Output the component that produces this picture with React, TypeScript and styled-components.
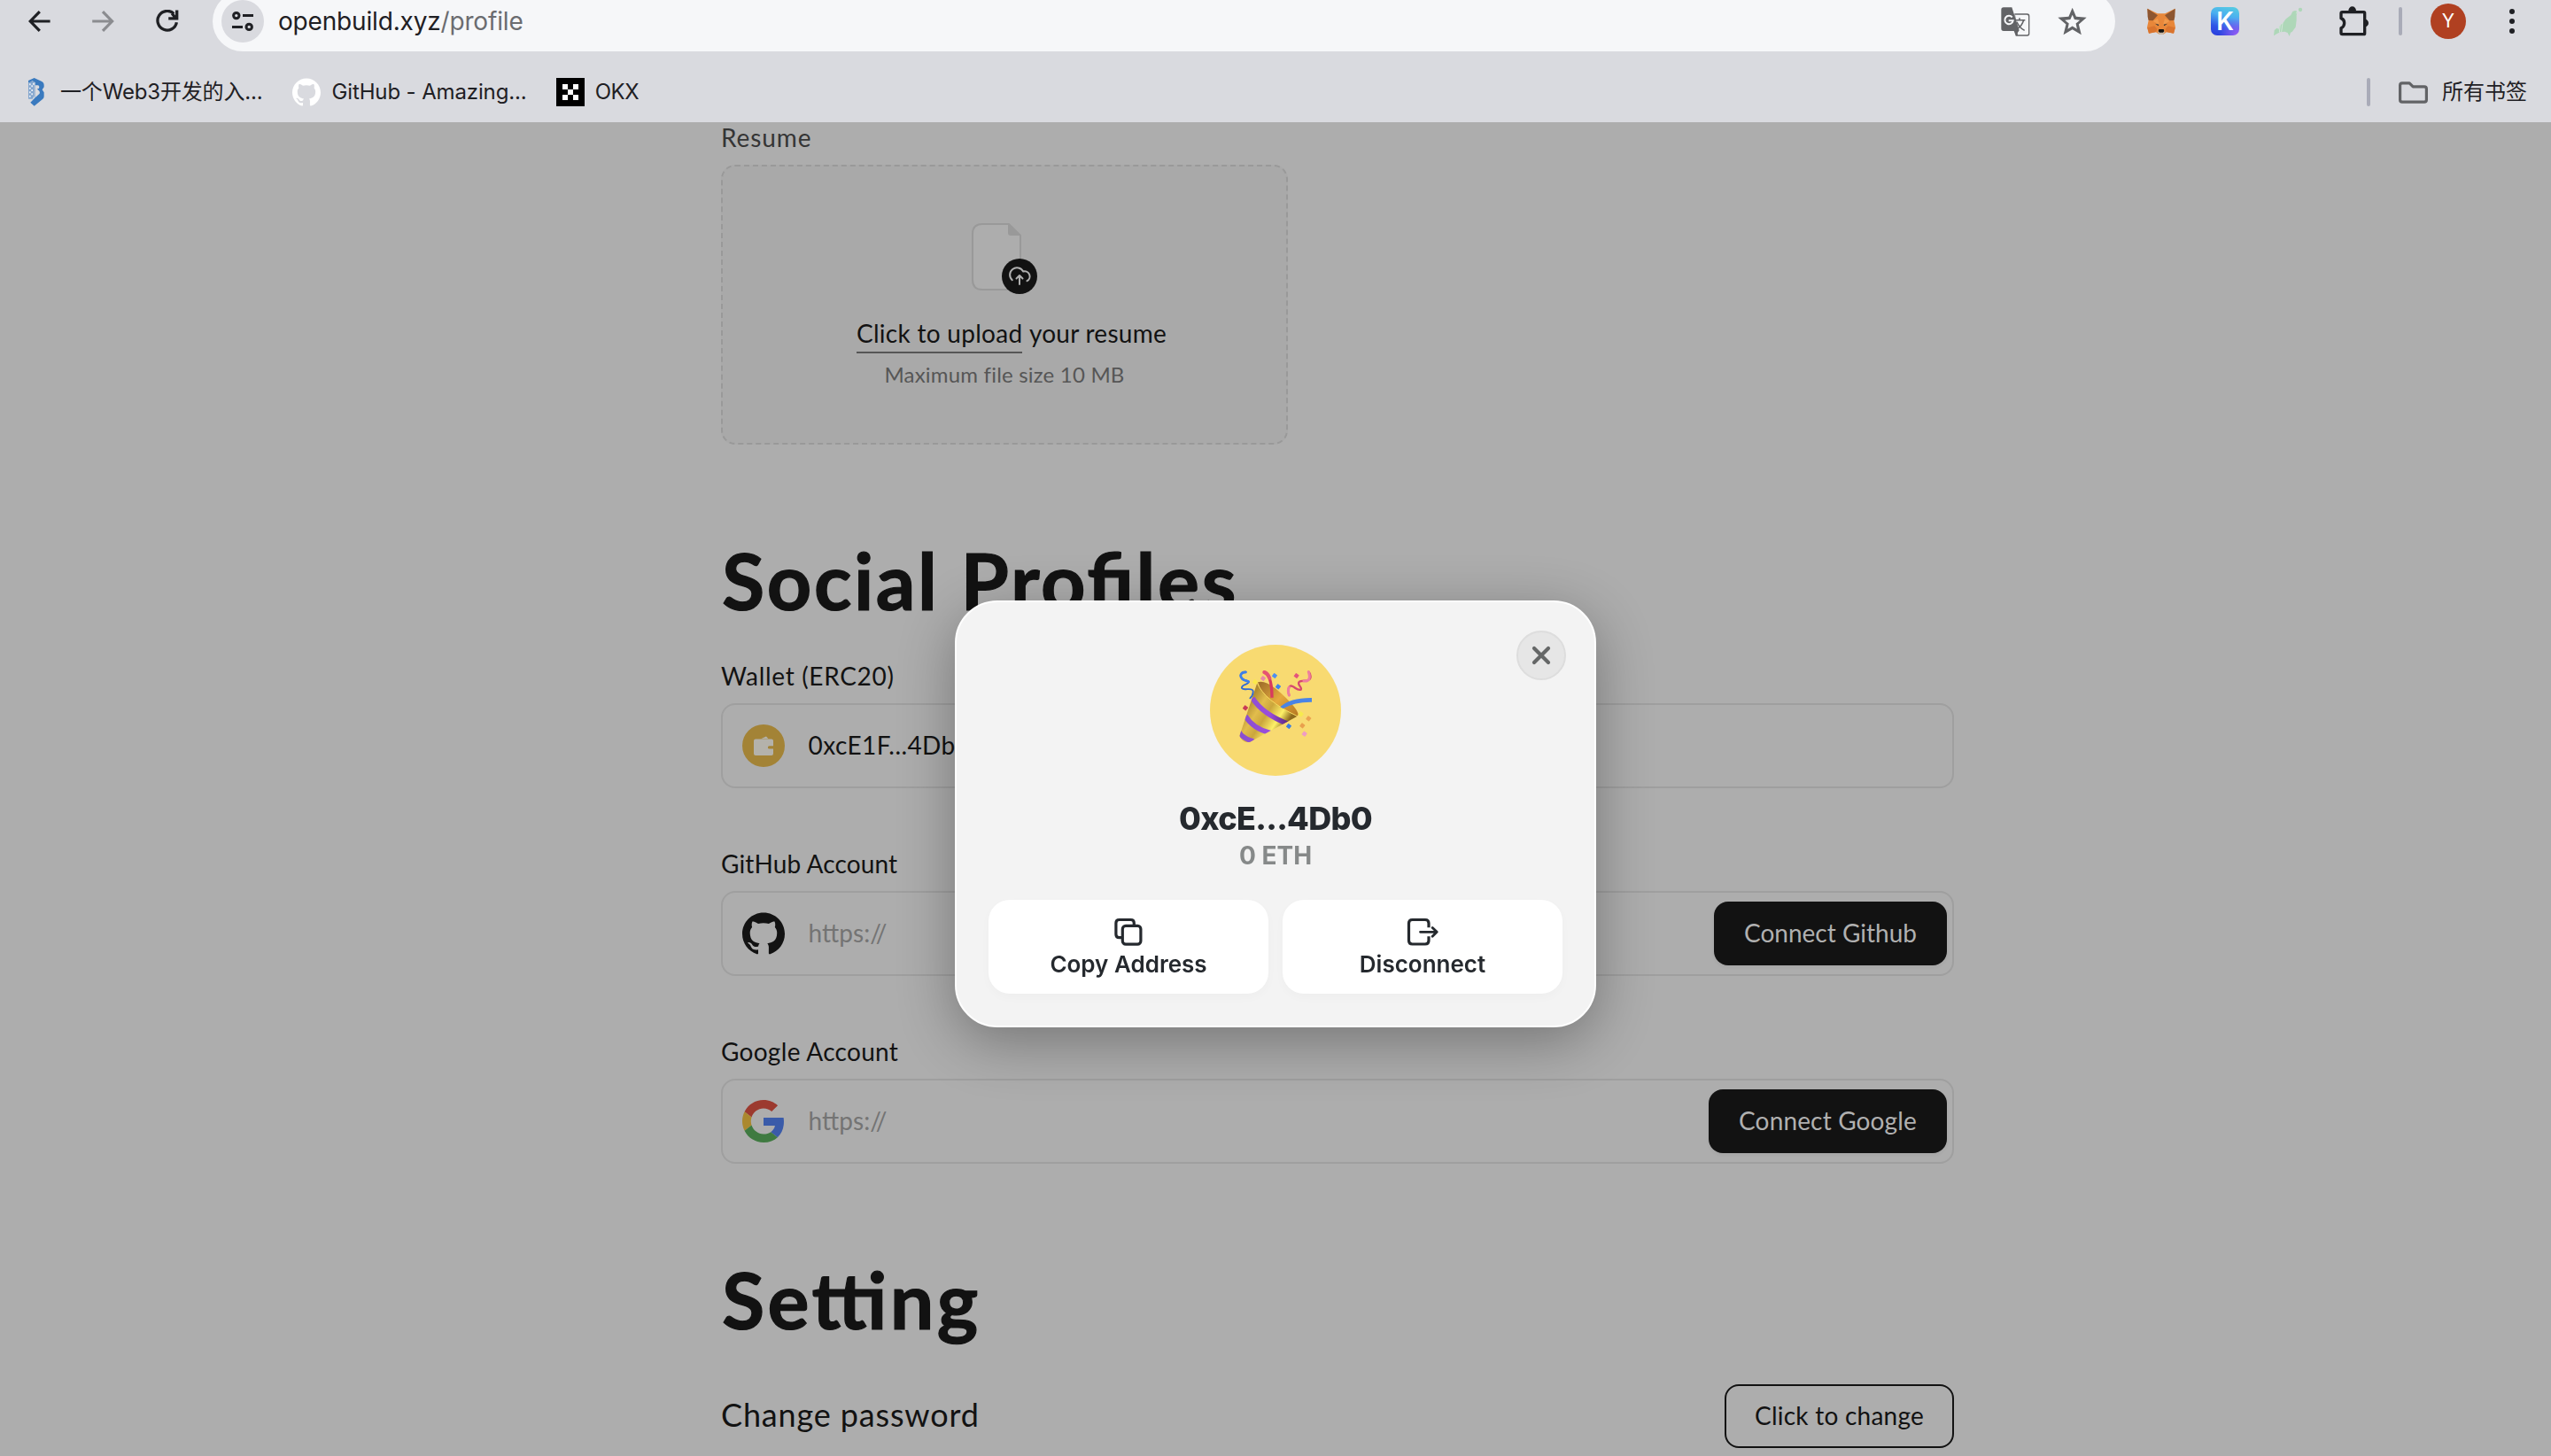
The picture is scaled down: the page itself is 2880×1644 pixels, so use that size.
import React from "react";
import styled, { createGlobalStyle } from "styled-components";
import { SiGithub } from "react-icons/si";

const GlobalStyle = createGlobalStyle`
  *, *::before, *::after { box-sizing: border-box; }
  body { margin: 0; background: #adadad; overflow: hidden; }
  button { font: inherit; color: inherit; border: 0; margin: 0; padding: 0; background: none; }
  svg { display: block; flex: none; }
`;

const uiFont = `Inter, "Noto Sans CJK SC", sans-serif`;
const pageFont = `Lato, "Noto Sans", sans-serif`;

const Window = styled.div`
  width: 2880px;
  height: 1644px;
  overflow: hidden;
  display: flex;
  flex-direction: column;
  background: #adadad;
`;

/* ---------- browser chrome ---------- */

const Chrome = styled.header`
  flex: none;
  height: 138px;
  background: #d9dadf;
  font-family: ${uiFont};
  color: #1f2024;
  display: flex;
  flex-direction: column;
  justify-content: flex-end;
`;

const Toolbar = styled.div`
  flex: none;
  height: 68px;
  display: flex;
  align-items: center;
`;

const NavButtons = styled.div`
  width: 240px;
  padding-left: 32px;
  display: flex;
  align-items: center;
  gap: 47px;
`;

const Omnibox = styled.div`
  width: 2148px;
  height: 68px;
  border-radius: 34px;
  background: #f6f7f9;
  padding: 0 32px 0 10px;
  display: flex;
  align-items: center;
`;

const SiteInfo = styled.div`
  width: 48px;
  height: 48px;
  border-radius: 50%;
  background: #d9dadf;
  display: grid;
  place-items: center;
`;

const Url = styled.div`
  flex: 1;
  margin-left: 16px;
  font-size: 28px;
  line-height: 40px;
  letter-spacing: -0.17px;
`;

const UrlPath = styled.span`
  color: #6b6c70;
`;

const OmniboxActions = styled.div`
  display: flex;
  align-items: center;
  gap: 31px;
`;

const Extensions = styled.div`
  display: flex;
  align-items: center;
  margin-left: 36px;
`;

const Slot = styled.div<{ $w: number }>`
  width: ${(p) => p.$w}px;
  display: flex;
  align-items: center;
`;

const KBadge = styled.div`
  width: 32px;
  height: 32px;
  border-radius: 7px;
  background: radial-gradient(circle at 95% 100%, #9a5cf5 0%, rgba(154, 92, 245, 0) 48%),
    linear-gradient(195deg, #58cfe0 0%, #49aef0 35%, #2f55e6 70%, #2b3bdc 100%);
  color: #fff;
  font: 600 28px/32px Inter, sans-serif;
  text-align: center;
`;

const Divider = styled.i`
  display: block;
  width: 4px;
  height: 32px;
  border-radius: 2px;
  background: #a9abb8;
`;

const Avatar = styled.div`
  width: 40px;
  height: 40px;
  border-radius: 50%;
  background: #b04021;
  color: #fff;
  font-size: 21px;
  line-height: 40px;
  text-align: center;
`;

const Bookmarks = styled.nav`
  flex: none;
  height: 80px;
  padding: 12px 27px 0 32px;
  display: flex;
  align-items: center;
  font-size: 24px;
  line-height: 32px;
`;

const Bookmark = styled.div<{ $gap: number; $after?: number }>`
  display: flex;
  align-items: center;
  gap: ${(p) => p.$gap}px;
  margin-right: ${(p) => p.$after ?? 0}px;
  white-space: nowrap;
`;

const Label = styled.span<{ $ls: number }>`
  letter-spacing: ${(p) => p.$ls}px;
`;

const OkxMark = styled.div`
  width: 32px;
  height: 32px;
  background: #000;
  display: grid;
  place-items: center;
`;

const AllBookmarks = styled.div`
  margin-left: auto;
  display: flex;
  align-items: center;
`;

const FolderWrap = styled.span`
  margin: 0 16px 0 32px;
`;

/* ---------- page ---------- */

const Page = styled.main`
  flex: 1;
  min-height: 0;
  overflow: hidden;
  display: flex;
  justify-content: center;
  padding-left: 140px;
  font-family: ${pageFont};
  font-size: 28px;
  line-height: 40px;
  color: #121212;
`;

const Column = styled.div`
  width: 1392px;
  margin-top: -3px;
`;

const Field = styled.section<{ $after?: number }>`
  display: flex;
  flex-direction: column;
  gap: 11px;
  margin-bottom: ${(p) => p.$after ?? 65}px;
`;

const FieldLabel = styled.label<{ $ls: number; $muted?: boolean }>`
  letter-spacing: ${(p) => p.$ls}px;
  color: ${(p) => (p.$muted ? "#353535" : "#121212")};
`;

const DropZone = styled.div`
  width: 640px;
  height: 316px;
  border-radius: 16px;
  background: #a9a9a9;
  display: flex;
  flex-direction: column;
  align-items: center;
  padding-top: 64px;
  border: 2px dashed #999;
`;

const DropTitle = styled.div`
  margin-top: 24px;
  padding-left: 16px;
  display: flex;
  gap: 7.5px;
  line-height: 41px;
  white-space: nowrap;
`;

const DropLink = styled.span`
  letter-spacing: 0.28px;
  border-bottom: 2px solid #565656;
`;

const DropRest = styled.span`
  letter-spacing: 0.26px;
`;

const DropHint = styled.div`
  margin-top: 8px;
  font-size: 24px;
  line-height: 32px;
  letter-spacing: 0.2px;
  color: #565656;
`;

const Heading = styled.h2<{ $ls: number }>`
  margin: 0 0 40px 1px;
  font-size: 88px;
  font-weight: 700;
  line-height: 96px;
  letter-spacing: ${(p) => p.$ls}px;
  font-feature-settings: "liga" 1;
  -webkit-text-stroke: 1.2px #121212;
`;

const InputBox = styled.div`
  height: 96px;
  border: 2px solid #9f9f9f;
  border-radius: 16px;
  padding: 0 6px 0 22px;
  display: flex;
  align-items: center;
`;

const InputText = styled.span<{ $ls: number; $placeholder?: boolean }>`
  flex: 1;
  padding: 0 0 3px 26.5px;
  letter-spacing: ${(p) => p.$ls}px;
  color: ${(p) => (p.$placeholder ? "#747474" : "#121212")};
  font-feature-settings: "liga" 1;
`;

const WalletBadge = styled.div`
  width: 48px;
  height: 48px;
  border-radius: 50%;
  background: #a38336;
  display: grid;
  place-items: center;
`;

const SolidButton = styled.button<{ $w: number; $ls: number }>`
  width: ${(p) => p.$w}px;
  height: 72px;
  padding-bottom: 2px;
  border-radius: 16px;
  background: #121212;
  color: #b0b0b0;
  letter-spacing: ${(p) => p.$ls}px;
  box-shadow: 0 2px 4px rgba(0, 0, 0, 0.05);
`;

const SettingRow = styled.div`
  display: flex;
  justify-content: space-between;
  align-items: center;
  height: 72px;
  margin-top: 48px;
`;

const SettingName = styled.span`
  padding: 0 0 4px 0;
  font-size: 36px;
  line-height: 48px;
  letter-spacing: 0.85px;
`;

const OutlineButton = styled.button`
  width: 259px;
  height: 72px;
  padding-bottom: 2px;
  border: 2px solid #121212;
  border-radius: 16px;
  letter-spacing: 0.24px;
`;

/* ---------- wallet dialog ---------- */

const Overlay = styled.div`
  position: fixed;
  inset: 138px 0 0 0;
  display: flex;
  justify-content: center;
  align-items: flex-start;
  padding-top: 540px;
  overflow: hidden;
  font-family: ${uiFont};
  color: #25292e;
`;

const Dialog = styled.div`
  position: relative;
  width: 724px;
  height: 482px;
  border: 2px solid #fff;
  border-radius: 48px;
  background: #f3f3f3;
  box-shadow: 0 16px 64px rgba(0, 0, 0, 0.32);
  padding: 48px 36px 36px;
  display: flex;
  flex-direction: column;
  align-items: center;
`;

const CloseButton = styled.button`
  position: absolute;
  top: 32px;
  right: 32px;
  width: 56px;
  height: 56px;
  border-radius: 50%;
  border: 2px solid #dddddd;
  background: #e6e6e6;
  display: grid;
  place-items: center;
`;

const Emblem = styled.div`
  width: 148px;
  height: 148px;
  border-radius: 50%;
  background: #f8da71;
  display: flex;
  justify-content: center;
  padding-top: 29px;
`;

const Address = styled.div`
  margin-top: 26px;
  font-size: 36px;
  font-weight: 800;
  line-height: 44px;
  letter-spacing: -0.72px;
`;

const Balance = styled.div`
  margin-top: 2px;
  font-size: 28px;
  font-weight: 700;
  line-height: 36px;
  color: #868989;
`;

const Actions = styled.div`
  width: 100%;
  margin-top: 32px;
  display: grid;
  grid-template-columns: 1fr 1fr;
  gap: 16px;
`;

const ActionButton = styled.button`
  height: 106px;
  border-radius: 24px;
  background: #fff;
  box-shadow: 0 4px 12px rgba(0, 0, 0, 0.025);
  display: flex;
  flex-direction: column;
  align-items: center;
  padding-top: 20px;
  gap: 5px;
  font-size: 26px;
  font-weight: 600;
  line-height: 32px;
`;

/* ---------- icons ---------- */

const BackIcon = () => (
  <svg width="25" height="24" viewBox="0 0 25 24" fill="none" stroke="#1f2024" strokeWidth="3.2">
    <path d="M12.8 1.2 2.2 12l10.6 10.8M2.4 12H24.6" />
  </svg>
);

const ForwardIcon = () => (
  <svg width="25" height="24" viewBox="0 0 25 24" fill="none" stroke="#8b8c90" strokeWidth="3.2">
    <path d="M12 1.2 22.6 12 12 22.8M22.4 12H.2" />
  </svg>
);

const ReloadIcon = () => (
  <svg width="26" height="26" viewBox="0 0 26 26" fill="none" stroke="#1f2024" strokeWidth="3.3">
    <path d="M20.2 4.4A10.8 10.8 0 1 0 23.4 14.2" />
    <path d="M23.7.6v9.3H14.2M21.8 8.8l-3.6-4.6" />
  </svg>
);

const TuneIcon = () => (
  <svg width="24" height="24" viewBox="0 0 24 24" fill="none" stroke="#1f2024" strokeWidth="3">
    <circle cx="4.8" cy="5.6" r="3.2" />
    <path d="M12 5.6h12M0 18.4h12" />
    <circle cx="19.2" cy="18.4" r="3.2" />
  </svg>
);

const TranslateIcon = () => (
  <svg width="33" height="33" viewBox="58 22 99 99">
    <path d="M104 44h43q8 0 8 8v60q0 8-8 8h-39z" fill="#626366" />
    <path d="M106 48h40q5 0 5 5v58q0 5-5 5h-31z" fill="#f6f7f9" />
    <path d="M104 66h36M121 59v7M135 66q-6 20-22 30M112 72q8 20 26 29" fill="none" stroke="#626366" strokeWidth="4.600" />
    <path d="M67 23h28l25 78-12 17-6-15H67q-8 0-8-8V31q0-8 8-8z" fill="#626366" />
    <path d="M96 56.500a14 14 0 1 0 3 11.500H84" fill="none" stroke="#f6f7f9" strokeWidth="6" />
  </svg>
);

const StarIcon = () => (
  <svg width="33" height="32" viewBox="249 21 101 96">
    <path
      fillRule="evenodd"
      fill="#626366"
      d="M300 22l13 31 36 3-27 24 9 36-31-19-31 19 9-36-28-24 37-3zM300 47l-7 16-19 2 14 12-4 19 16-10 16 10-4-19 14-12-19-2z"
    />
  </svg>
);

const FoxIcon = () => (
  <svg width="32" height="30" viewBox="552 26 96 90">
    <path d="M553 28l34 17h26l34-17-4 40 5 24-6 20-24-4-12 8h-12l-12-8-24 4-6-20 5-24z" fill="#e8873a" />
    <path d="M553 28l35 23-16 18-15-1-3-12zM647 28l-35 23 16 18 15-1 3-12z" fill="#8e5630" />
    <path d="M553 93l24-6 9 10-4 10-24 5zM647 93l-24-6-9 10 4 10 24 5z" fill="#d9742f" />
    <path d="M572 70l16-8 6 22zM628 70l-16-8-6 22z" fill="#f09a4c" />
    <path d="M579 79l13 3-2 5zM621 79l-13 3 2 5z" fill="#2f3437" />
    <path d="M588 107l5-5h14l5 5-5 9h-14z" fill="#c9b8a6" />
    <path d="M592 98h16l2 7-4 4h-12l-4-4z" fill="#15130f" />
  </svg>
);

const LeafIcon = () => (
  <svg width="33" height="33" viewBox="984 22 99 99" fill="#aed7b8">
    <circle cx="1074" cy="31" r="6.5" />
    <path d="M1056 34l8 2-3 14v16l-3 24-12 16-5 2-4 13-6-12-10-4-14 2-7-4 4-18 12-10 8-12 18-14 6-12z" />
    <path d="M984 119l2-18 8-8 7 3 2 12-8 4z" />
    <path d="M1006 82l-3 24M1014 76l-4 30M1066 32l-6 12" stroke="#d9eadf" strokeWidth="2.4" fill="none" />
  </svg>
);

const PuzzleIcon = () => (
  <svg width="34" height="34" viewBox="1204 15 102 102">
    <path
      d="M1214 35H1287Q1290 35 1290 38V107Q1290 110 1287 110H1214Q1210 110 1210 106V89Q1221 84 1221 72T1210 56V39Q1210 35 1214 35Z"
      fill="none"
      stroke="#1f2024"
      strokeWidth="10"
      strokeLinejoin="round"
    />
    <path d="M1235 31a13 15 0 0 1 26 0zM1291 59a12 13 0 0 1 0 26z" fill="#1f2024" />
  </svg>
);

const KebabIcon = () => (
  <svg width="8" height="30" viewBox="0 0 8 30" fill="#1f2024">
    <circle cx="4" cy="4" r="3" />
    <circle cx="4" cy="15" r="3" />
    <circle cx="4" cy="26" r="3" />
  </svg>
);

const BlockIcon = () => (
  <svg width="18" height="32" viewBox="96 264 54 96">
    <path d="M96 273l20-9 24 11q9 4 9 13v7l-6 9 6 9v14q0 5-4 8l-29 24-13-12 16-16v-22-30l-9-5-14 6z" fill="#3a7abf" />
    <path d="M96 275h20v50l-6 10H96z" fill="#3a7abf" opacity=".55" />
    <path d="M120 289h8q5 0 5 6t-5 6h-3l8 7q3 4 1 9l-14 13z" fill="#d9dadf" />
    <path
      d="M99 283h5v6h-5zM106 289h5v6h-5zM99 296h5v6h-5zM106 303h5v6h-5zM99 310h5v6h-5zM106 316h5v6h-5zM99 323h5v6h-5zM111 281h5v6h-5z"
      fill="#e9eff7"
    />
  </svg>
);

const FolderIcon = () => (
  <svg width="33" height="25" viewBox="0 0 33 25" fill="none" stroke="#626366" strokeWidth="3.2">
    <path d="M4 1.800h8.200l4 4H29q2.400 0 2.400 2.400v12.600q0 2.400-2.400 2.400H4q-2.400 0-2.400-2.400V4.200q0-2.400 2.400-2.400z" strokeLinejoin="round" />
  </svg>
);

const OkxSquares = () => (
  <svg width="20" height="20" viewBox="0 0 20 20" fill="#fff">
    <path d="M1 1h6v6H1zM13 1h6v6h-6zM7 7h6v6H7zM1 13h6v6H1zM13 13h6v6h-6z" />
  </svg>
);

const UploadIcon = () => (
  <svg width="74" height="80" viewBox="0 0 74 80" fill="none">
    <path d="M41 1H12Q1 1 1 12V64Q1 75 12 75H44Q55 75 55 64V14L42 1Z" fill="#adadad" stroke="#999" strokeWidth="2" />
    <path d="M41 1h2L56 14H44q-3 0-3-3z" fill="#999" />
    <circle cx="54" cy="60" r="20" fill="#121212" />
    <g stroke="#b0b0b0" strokeWidth="2" strokeLinecap="round" strokeLinejoin="round">
      <path d="M45.800 64.200A8 8 0 1 1 58.200 54.500A5.800 5.800 0 0 1 62.500 65.200" />
      <path d="M54 69V59.500M50.500 62.500L54 59L57.500 62.500" />
    </g>
  </svg>
);

const WalletIcon = () => (
  <svg width="24" height="24" viewBox="0 0 24 24" fill="#b4b2ab">
    <path d="M9 4.200 15 1.600 17.500 4.200z" />
    <path
      fillRule="evenodd"
      d="M3 4.500h18Q23 4.500 23 6.500V21Q23 23 21 23H3Q1 23 1 21V6.500Q1 4.500 3 4.500zM18.500 12.300h4.500v3.200h-4.500q-1.600 0-1.600-1.600t1.600-1.600z"
    />
  </svg>
);

const GoogleIcon = () => (
  <svg width="48" height="48" viewBox="0 0 48 48">
    <path fill="#9c3a2f" d="M24 9.5c3.54 0 6.71 1.22 9.21 3.6l6.85-6.85C35.9 2.38 30.47 0 24 0 14.62 0 6.51 5.38 2.56 13.22l7.98 6.19C12.43 13.72 17.74 9.5 24 9.5z" />
    <path fill="#3a5ba9" d="M46.98 24.55c0-1.57-.15-3.09-.38-4.55H24v9.02h12.94c-.58 2.96-2.26 5.48-4.78 7.18l7.73 6c4.51-4.18 7.09-10.36 7.09-17.65z" />
    <path fill="#ab882e" d="M10.53 28.59c-.48-1.45-.76-2.99-.76-4.59s.27-3.14.76-4.59l-7.98-6.19C.92 16.46 0 20.12 0 24c0 3.88.92 7.54 2.56 10.78l7.97-6.19z" />
    <path fill="#3f7a41" d="M24 48c6.48 0 11.93-2.13 15.89-5.81l-7.73-6c-2.15 1.45-4.92 2.3-8.16 2.3-6.26 0-11.57-4.22-13.47-9.91l-7.98 6.19C6.51 42.62 14.62 48 24 48z" />
  </svg>
);

const CloseIcon = () => (
  <svg width="22" height="22" viewBox="0 0 22 22" stroke="#656767" strokeWidth="4.2" strokeLinecap="round">
    <path d="M3 3l16 16M19 3L3 19" />
  </svg>
);

const CopyIcon = () => (
  <svg width="32" height="32" viewBox="0 0 32 32" fill="none" stroke="#25292e" strokeWidth="3.2" strokeLinejoin="round">
    <rect x="9.300" y="9.300" width="20.600" height="20.800" rx="3.600" />
    <path d="M9.300 22.600H5.600Q1.900 22.600 1.900 18.900V6.200Q1.900 2.500 5.600 2.500H18.600Q22.300 2.500 22.300 6.200V9" />
  </svg>
);

const DisconnectIcon = () => (
  <svg width="36" height="32" viewBox="0 0 36 32" fill="none" stroke="#25292e" strokeWidth="3.2" strokeLinecap="butt">
    <path d="M25 11.200V6.500Q25 2.500 21 2.500H6.500Q2.500 2.500 2.500 6.500V26Q2.500 30 6.500 30H21Q25 30 25 26V21.300" />
    <path d="M15.500 16.300H34M29.200 11.400L34.200 16.300L29.200 21.200" strokeWidth="2.800" strokeLinecap="round" strokeLinejoin="round" />
  </svg>
);

const confetti: [number, number, string][] = [
  [231, 181, "#fbe94a"],
  [258, 169, "#e889a8"],
  [297, 160, "#4f8ff0"],
  [309, 197, "#3f83ea"],
  [371, 160, "#e4547c"],
  [198, 269, "#c93b56"],
  [345, 331, "#3b7fe0"],
  [386, 290, "#f7ea4e"],
  [412, 305, "#eba452"],
  [391, 329, "#e9a04d"],
  [398, 357, "#ef9cc4"],
];

const PartyPopper = () => (
  <svg width="82" height="82" viewBox="177 142 246 246">
    <defs>
      <linearGradient id="cone" x1="195" y1="270" x2="320" y2="350" gradientUnits="userSpaceOnUse">
        <stop offset="0" stopColor="#b08a30" />
        <stop offset="0.28" stopColor="#e2bd4c" />
        <stop offset="0.5" stopColor="#cba63c" />
        <stop offset="0.78" stopColor="#fdf068" />
        <stop offset="1" stopColor="#8d6a1d" />
      </linearGradient>
      <linearGradient id="mouth" x1="250" y1="185" x2="370" y2="295" gradientUnits="userSpaceOnUse">
        <stop offset="0" stopColor="#a2702a" />
        <stop offset="0.5" stopColor="#e5a93d" />
        <stop offset="1" stopColor="#b97b23" />
      </linearGradient>
      <linearGradient id="stripe" x1="190" y1="0" x2="340" y2="0" gradientUnits="userSpaceOnUse">
        <stop offset="0" stopColor="#8a4fd0" />
        <stop offset="0.6" stopColor="#9b4ddb" />
        <stop offset="1" stopColor="#5d2a86" />
      </linearGradient>
      <clipPath id="coneClip">
        <path d="M238 184Q262 244 374 297L214 384Q190 390 178 364Z" />
      </clipPath>
    </defs>
    <path d="M240 182Q268 172 322 222T377 292Q370 304 330 284T256 222Z" fill="url(#mouth)" />
    <path d="M238 184Q262 244 374 297L214 384Q190 390 178 364Z" fill="url(#cone)" />
    <g clipPath="url(#coneClip)" fill="none" stroke="url(#stripe)" strokeWidth="17">
      <path d="M222 236Q256 290 344 324" />
      <path d="M198 296Q224 340 284 354" />
      <path d="M176 350Q190 374 226 382" />
    </g>
    <path d="M238 184Q262 244 374 297" fill="none" stroke="#f6d860" strokeWidth="3" />
    <g fill="none" strokeLinecap="round">
      <path
        d="M200 147C184 146 176 160 188 172C196 179 210 176 210 180C210 190 182 190 186 202C192 212 222 198 224 212C225 222 220 230 214 236"
        stroke="#3068d4"
        strokeWidth="5.500"
      />
      <path d="M199 148C184 147 176 160 188 171C194 176 204 177 208 180" stroke="#3f7fe8" strokeWidth="8.500" />
      <path d="M262 148Q288 158 288 234" stroke="#d83a5f" strokeWidth="10" strokeLinecap="butt" />
      <path d="M262 148Q274 152 280 168" stroke="#e65573" strokeWidth="12" />
      <path
        d="M346 226C340 204 346 190 358 196C370 202 374 210 386 207C392 200 372 190 380 181C388 172 412 184 418 168C420 158 416 150 412 147"
        stroke="#d6486f"
        strokeWidth="7"
      />
      <path d="M346 226C342 214 342 206 346 199M396 178C412 180 420 170 412 147" stroke="#ee7f9f" strokeWidth="9" />
    </g>
    <path d="M316 266Q350 234 423 235V249Q366 248 326 271Z" fill="#4a84e6" />
    {confetti.map(([x, y, color]) => (
      <rect key={`${x}-${y}`} x={x - 7} y={y - 7} width="14" height="14" rx="2" fill={color} transform={`rotate(38 ${x} ${y})`} />
    ))}
  </svg>
);

/* ---------- app ---------- */

const BrowserChrome = () => (
  <Chrome>
    <Toolbar>
      <NavButtons>
        <BackIcon />
        <ForwardIcon />
        <ReloadIcon />
      </NavButtons>
      <Omnibox>
        <SiteInfo>
          <TuneIcon />
        </SiteInfo>
        <Url>
          openbuild.xyz<UrlPath>/profile</UrlPath>
        </Url>
        <OmniboxActions>
          <TranslateIcon />
          <StarIcon />
        </OmniboxActions>
      </Omnibox>
      <Extensions>
        <Slot $w={72}>
          <FoxIcon />
        </Slot>
        <Slot $w={71}>
          <KBadge>K</KBadge>
        </Slot>
        <Slot $w={74}>
          <LeafIcon />
        </Slot>
        <Slot $w={67}>
          <PuzzleIcon />
        </Slot>
        <Slot $w={36}>
          <Divider />
        </Slot>
        <Slot $w={88}>
          <Avatar>Y</Avatar>
        </Slot>
        <KebabIcon />
      </Extensions>
    </Toolbar>
    <Bookmarks>
      <Bookmark $gap={18} $after={34}>
        <BlockIcon />
        <Label $ls={-0.17}>一个Web3开发的入...</Label>
      </Bookmark>
      <Bookmark $gap={12} $after={33}>
        <SiGithub size={32} color="#fff" />
        <Label $ls={-0.13}>GitHub - Amazing...</Label>
      </Bookmark>
      <Bookmark $gap={12}>
        <OkxMark>
          <OkxSquares />
        </OkxMark>
        <Label $ls={-0.39}>OKX</Label>
      </Bookmark>
      <AllBookmarks>
        <Divider />
        <FolderWrap>
          <FolderIcon />
        </FolderWrap>
        <Label $ls={0}>所有书签</Label>
      </AllBookmarks>
    </Bookmarks>
  </Chrome>
);

const ProfilePage = () => (
  <Page>
    <Column>
      <Field $after={105}>
        <FieldLabel $ls={0.9} $muted>
          Resume
        </FieldLabel>
        <DropZone>
          <UploadIcon />
          <DropTitle>
            <DropLink>Click to upload</DropLink>
            <DropRest>your resume</DropRest>
          </DropTitle>
          <DropHint>Maximum file size 10 MB</DropHint>
        </DropZone>
      </Field>

      <Heading $ls={2.6}>Social Profiles</Heading>
      <Field>
        <FieldLabel $ls={0.68}>Wallet (ERC20)</FieldLabel>
        <InputBox>
          <WalletBadge>
            <WalletIcon />
          </WalletBadge>
          <InputText $ls={0.42}>0xcE1F...4Db0</InputText>
        </InputBox>
      </Field>
      <Field>
        <FieldLabel $ls={0.12}>GitHub Account</FieldLabel>
        <InputBox>
          <SiGithub size={48} />
          <InputText $ls={0.1} $placeholder>
            https://
          </InputText>
          <SolidButton $w={263} $ls={0}>
            Connect Github
          </SolidButton>
        </InputBox>
      </Field>
      <Field $after={105}>
        <FieldLabel $ls={0.3}>Google Account</FieldLabel>
        <InputBox>
          <GoogleIcon />
          <InputText $ls={0.1} $placeholder>
            https://
          </InputText>
          <SolidButton $w={269} $ls={0.15}>
            Connect Google
          </SolidButton>
        </InputBox>
      </Field>

      <Heading $ls={3.4}>Setting</Heading>
      <SettingRow>
        <SettingName>Change password</SettingName>
        <OutlineButton>Click to change</OutlineButton>
      </SettingRow>
    </Column>
  </Page>
);

const WalletDialog = () => (
  <Overlay>
    <Dialog role="dialog">
      <CloseButton aria-label="Close">
        <CloseIcon />
      </CloseButton>
      <Emblem>
        <PartyPopper />
      </Emblem>
      <Address>0xcE...4Db0</Address>
      <Balance>0 ETH</Balance>
      <Actions>
        <ActionButton>
          <CopyIcon />
          Copy Address
        </ActionButton>
        <ActionButton>
          <DisconnectIcon />
          Disconnect
        </ActionButton>
      </Actions>
    </Dialog>
  </Overlay>
);

export default function App() {
  return (
    <Window>
      <GlobalStyle />
      <BrowserChrome />
      <ProfilePage />
      <WalletDialog />
    </Window>
  );
}
